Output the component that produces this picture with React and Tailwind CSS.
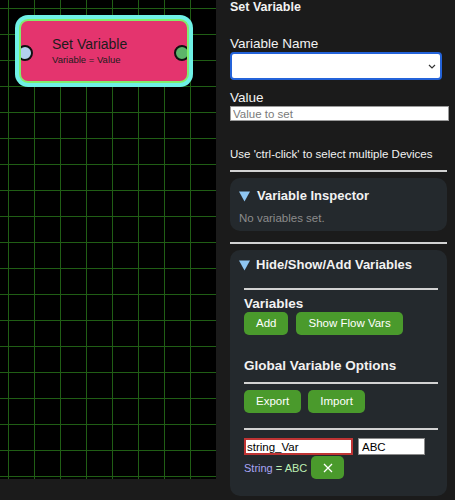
import React from "react";

function Triangle() {
  return (
    <svg width="11" height="11" viewBox="0 0 11 11" className="shrink-0">
      <polygon points="0,0.5 11,0.5 5.5,10.5" fill="#8ec6f2" />
    </svg>
  );
}

function Rule({ className = "" }) {
  return <div className={"h-[2px] bg-[#d2d2d2] " + className} />;
}

function GreenButton({ children, className = "" }) {
  return (
    <button
      className={
        "h-[23px] px-3 rounded-[5px] bg-[#4a9a2c] text-white text-[11.5px] leading-none flex items-center justify-center " +
        className
      }
    >
      {children}
    </button>
  );
}

function SetVariableNode() {
  return (
    <div className="absolute left-[19px] top-[19px] w-[170px] h-[64px] rounded-[9px] border-2 border-[#80ee6c] shadow-[0_0_0_4px_#6ff1e6] bg-[#e4346e] overflow-hidden">
      {/* input / output ports */}
      <div className="absolute left-[-4px] top-[24px] w-[16px] h-[16px] rounded-full bg-[#b3d0ef] border-2 border-[#111]" />
      <div className="absolute right-[-3px] top-[24px] w-[16px] h-[16px] rounded-full bg-[#5db46a] border-2 border-[#111]" />
      <div className="pl-[31px] pt-[15px] text-[#1c1c1c]">
        <div className="text-[14px] leading-[16px]">Set Variable</div>
        <div className="mt-[2px] text-[9.5px] leading-[12px]">Variable = Value</div>
      </div>
    </div>
  );
}

export default function App() {
  return (
    <div className="w-[455px] h-[500px] bg-[#1b1b1b] flex overflow-hidden font-['Liberation_Sans',Arial,sans-serif]">
      {/* flow canvas */}
      <div className="relative w-[216px] h-[479px] shrink-0 bg-black bg-[linear-gradient(to_right,#205e15_1px,transparent_1px),linear-gradient(to_bottom,#205e15_1px,transparent_1px)] bg-[size:26px_26px] bg-[position:8px_8px]">
        <SetVariableNode />
      </div>

      {/* properties panel */}
      <div className="flex-1 min-w-0 pl-[14px] pr-[8px] text-[#f2f2f2]">
        <div className="text-[12.5px] leading-[15px] font-bold">Set Variable</div>

        <div className="mt-[21px] text-[13.5px] leading-[16px]">Variable Name</div>
        <div className="relative w-[212px] h-[28px] bg-white border-2 border-[#2463d9] rounded-[4px]">
          <svg
            width="8"
            height="5"
            viewBox="0 0 8 5"
            className="absolute right-[4px] top-[10px]"
          >
            <path d="M1 1 L4 4 L7 1" fill="none" stroke="#333" strokeWidth="1.2" />
          </svg>
        </div>

        <div className="mt-[10px] text-[13.5px] leading-[16px]">Value</div>
        <input
          placeholder="Value to set"
          className="block w-[219px] h-[15px] bg-white border border-[#9a9a9a] px-[2px] text-[11.5px] leading-[13px] text-black placeholder:text-[#7a7a7a] outline-none"
        />

        <div className="mt-[26px] text-[11.5px] leading-[14px]">
          Use 'ctrl-click' to select multiple Devices
        </div>
        <Rule className="mt-[9px]" />

        {/* variable inspector */}
        <div className="mt-[6px] rounded-[10px] bg-[#24292d] pt-[10px] px-[9px] pb-[6px]">
          <div className="flex items-center gap-[7px] h-[16px]">
            <Triangle />
            <span className="text-[13px] font-bold leading-[16px]">Variable Inspector</span>
          </div>
          <div className="mt-[7px] text-[11.5px] leading-[14px] text-[#8c8c8c]">No variables set.</div>
        </div>

        <Rule className="mt-[11px]" />

        {/* hide / show / add variables */}
        <div className="mt-[6px] rounded-[10px] bg-[#24292d] pt-[7px] pb-[17px]">
          <div className="flex items-center gap-[6px] h-[16px] pl-[9px]">
            <Triangle />
            <span className="text-[13px] font-bold leading-[16px]">Hide/Show/Add Variables</span>
          </div>

          <div className="pl-[14px] pr-[9px]">
            <Rule className="mt-[15px]" />
            <div className="mt-[6px] text-[13.5px] font-bold leading-[16px]">Variables</div>
            <div className="flex gap-[8px]">
              <GreenButton>Add</GreenButton>
              <GreenButton>Show Flow Vars</GreenButton>
            </div>

            <div className="mt-[23px] text-[13.5px] font-bold leading-[16px]">Global Variable Options</div>
            <Rule className="mt-[8px]" />
            <div className="mt-[6px] flex gap-[7px]">
              <GreenButton>Export</GreenButton>
              <GreenButton>Import</GreenButton>
            </div>

            <Rule className="mt-[15px]" />
            <div className="mt-[8px] flex gap-[5px]">
              <input
                defaultValue="string_Var"
                className="block w-[109px] h-[17px] bg-white border-2 border-[#bf3434] px-[1px] text-[11.5px] leading-[13px] text-black outline-none"
              />
              <input
                defaultValue="ABC"
                className="block w-[67px] h-[17px] bg-white border border-[#8a8a8a] px-[3px] text-[11.5px] leading-[13px] text-black outline-none"
              />
            </div>
            <div className="mt-[1px] flex items-center gap-[4px]">
              <span className="text-[11px] leading-[14px]">
                <span className="text-[#a9a5f4]">String</span>
                <span className="text-[#bdeeb4]"> = ABC</span>
              </span>
              <button className="w-[33px] h-[23px] rounded-[5px] bg-[#4a9a2c] flex items-center justify-center">
                <svg width="10" height="10" viewBox="0 0 10 10">
                  <path d="M1 1 L9 9 M9 1 L1 9" stroke="white" strokeWidth="1.3" />
                </svg>
              </button>
            </div>
          </div>
        </div>
      </div>
    </div>
  );
}
